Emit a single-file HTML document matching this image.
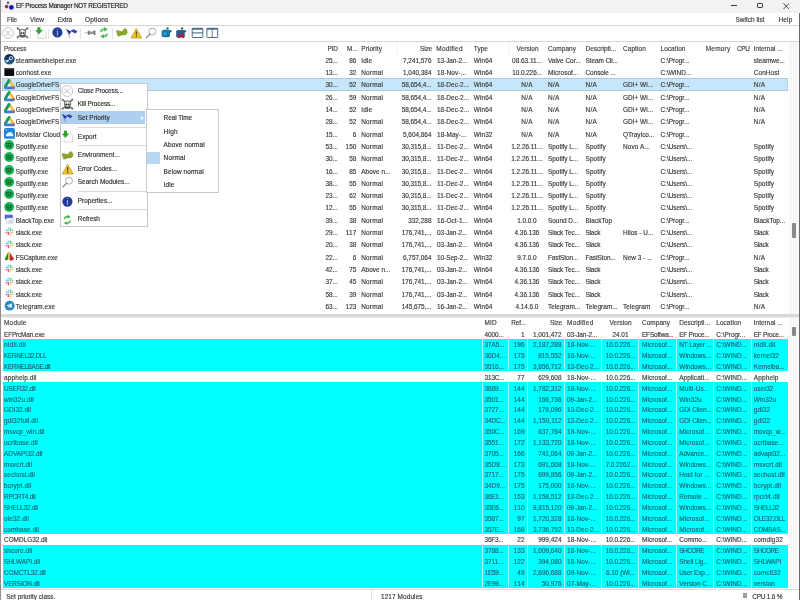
<!DOCTYPE html><html><head><meta charset="utf-8"><style>
*{margin:0;padding:0;box-sizing:border-box}
html,body{width:800px;height:600px;overflow:hidden;background:#fff}
body{position:relative;font-family:"Liberation Sans",sans-serif;font-size:6.45px;color:#383838;line-height:1}
.a{position:absolute;white-space:nowrap}
.t{position:absolute;white-space:nowrap;line-height:10px;height:10px;-webkit-text-stroke:0.15px currentColor}
.r{text-align:right}
.c{text-align:center}
.ic{position:absolute;width:11px;height:11px}
</style></head><body><div style="position:absolute;left:0;top:0;width:800px;height:600px;will-change:transform">
<div class="a" style="left:0;top:0;width:800px;height:13px;background:#f2f2f5"></div>
<div class="a" style="left:0;top:13px;width:800px;height:12px;background:#ffffff"></div>
<div class="a" style="left:0;top:24.5px;width:800px;height:1px;background:#d6d6d6"></div>
<div class="a" style="left:0;top:41.2px;width:800px;height:1px;background:#d6d6d6"></div>
<svg class="a" style="left:4px;top:1px" width="11" height="10" viewBox="0 0 11 10"><circle cx="4" cy="1.8" r="1.3" fill="#6a4a8a"/><circle cx="2.6" cy="5.6" r="1.8" fill="#a82838"/><circle cx="7.4" cy="6.4" r="2.4" fill="#1a1aa0"/></svg>
<div class="t " style="left:16.00px;top:0.57px;letter-spacing:-0.23px;color:#222;">EF Process Manager NOT REGISTERED</div>
<div class="a" style="left:731px;top:5px;width:6px;height:0.7px;background:#3a3a3a"></div>
<div class="a" style="left:757px;top:2.8px;width:5.5px;height:5.4px;border:0.75px solid #333;border-radius:1.2px"></div>
<svg class="a" style="left:783px;top:2.5px" width="6.5" height="6.5" viewBox="0 0 6.5 6.5"><path d="M0.4 0.4L6.1 6.1M6.1 0.4L0.4 6.1" stroke="#2a2a2a" stroke-width="0.8"/></svg>
<div class="t " style="left:7.00px;top:14.77px;letter-spacing:-0.11px;">File</div>
<div class="t " style="left:30.00px;top:14.77px;letter-spacing:0.06px;">View</div>
<div class="t " style="left:57.50px;top:14.77px;letter-spacing:-0.12px;">Extra</div>
<div class="t " style="left:85.00px;top:14.77px;letter-spacing:0.16px;">Options</div>
<div class="t " style="left:735.50px;top:14.77px;letter-spacing:0.04px;">Switch list</div>
<div class="t " style="left:778.50px;top:14.77px;letter-spacing:0.17px;">Help</div>

<svg class="a" style="left:0;top:24px" width="230" height="18" viewBox="0 24 230 18">
<svg x="2" y="27" width="12" height="12" viewBox="0 0 12 12" overflow="visible"><circle cx="6" cy="6" r="5.5" fill="#fcfcfc" stroke="#bdbdbd" stroke-width="0.8"/><path d="M3.3 3.3L8.7 8.7M8.7 3.3L3.3 8.7" stroke="#d4d4d4" stroke-width="1.1"/></svg>
<svg x="16" y="26.8" width="13" height="12" viewBox="0 0 13 12" overflow="visible"><path d="M1.5 1.3L11.5 10.7M11.5 1.3L1.5 10.7" stroke="#6a6a6a" stroke-width="1.4" stroke-linecap="round"/>
<circle cx="1.6" cy="1.6" r="1" fill="#777"/><circle cx="11.4" cy="1.6" r="1" fill="#777"/><circle cx="1.6" cy="10.4" r="1" fill="#777"/><circle cx="11.4" cy="10.4" r="1" fill="#777"/>
<path d="M3.4 5.4Q3.4 2.6 6.5 2.6Q9.6 2.6 9.6 5.4Q9.6 7 8.6 7.8V10.2H4.4V7.8Q3.4 7 3.4 5.4Z" fill="#ececec" stroke="#3a3a3a" stroke-width="0.8"/>
<ellipse cx="5.3" cy="6.3" rx="1" ry="0.9" fill="#222"/><ellipse cx="7.7" cy="6.3" rx="1" ry="0.9" fill="#222"/><path d="M4.6 8.4H8.4V10H4.6Z" fill="#444"/></svg>
<rect x="30.2" y="28.5" width="0.6" height="10.5" fill="#d0d0d0"/>
<svg x="35.5" y="27" width="12" height="12" viewBox="0 0 12 12" overflow="visible"><path d="M2 2.6H8.2L10.6 5V11.6H2Z" fill="#fafaf8" stroke="#c6c6c6" stroke-width="0.6"/><path d="M1.9 0.2H5V3.2H7.2L3.45 7.3L-0.3 3.2H1.9Z" fill="#2ca52c"/></svg>
<rect x="48" y="28.5" width="0.6" height="10.5" fill="#d0d0d0"/>
<svg x="51.6" y="26.6" width="11.6" height="11.6" viewBox="0 0 12 12" overflow="visible"><circle cx="6" cy="6" r="5.3" fill="#2a46a8"/><circle cx="6" cy="6" r="4.3" fill="#1f3c98"/><path d="M6 4.4V9.4" stroke="#dfe8ff" stroke-width="0.75"/><circle cx="6" cy="3" r="0.5" fill="#dfe8ff"/></svg>
<svg x="66" y="28" width="12" height="11" viewBox="0 0 12 11" overflow="visible"><path d="M0.3 0.8L4 9.8" stroke="#444" stroke-width="0.5"/><path d="M0.6 1.2L5.2 3.5L3.8 6.5L1.6 3.8Z" fill="#23309a"/><path d="M4.6 2.6L7.8 1.2L11.6 3.4L9.2 5.6L7 4.2L5.2 3.5Z" fill="#3346b0"/></svg>
<rect x="80.2" y="28.5" width="0.6" height="10.5" fill="#d0d0d0"/>
<svg x="84.2" y="29.6" width="11.5" height="6.7" viewBox="0 0 12 7" overflow="visible"><path d="M0.2 3.3H4" stroke="#b0b0b0" stroke-width="0.9"/><path d="M4 1.6H5.4L6.4 2.4H9.3L10.3 1.2H11.4V5.4H10.3L9.3 4.2H6.4L5.4 5H4Z" fill="#8a8a8a" stroke="#505050" stroke-width="0.5"/><path d="M6.4 2.8H9.2" stroke="#e0e0e0" stroke-width="0.6"/></svg>
<svg x="99.6" y="27" width="8.8" height="11.7" viewBox="0 0 9 12" overflow="visible"><path d="M1.2 5.2Q1.6 2.2 5.4 2.3" stroke="#5cc45c" stroke-width="1.8" fill="none"/><path d="M4.6 0.1L8.4 2.4L4.6 4.6Z" fill="#48b048"/><path d="M7.8 6.8Q7.4 9.8 3.6 9.7" stroke="#5cc45c" stroke-width="1.8" fill="none"/><path d="M4.4 11.9L0.6 9.6L4.4 7.4Z" fill="#48b048"/></svg>
<rect x="112.3" y="28.5" width="0.6" height="10.5" fill="#d0d0d0"/>
<svg x="116" y="28" width="12" height="9" viewBox="0 0 12 9" overflow="visible"><path d="M0.1 2.4Q3 2.2 5.7 3.4Q7.5 1 9.4 0.1Q11.2 1.5 11.8 4.3Q11 6 9.7 7L5.7 7.3Q3.5 8.6 2 8.6Q0.5 6 0.1 2.4Z" fill="#8aa62e"/><path d="M5.7 3.4L5.7 7.3" stroke="#7a9424" stroke-width="0.4"/></svg>
<svg x="130.5" y="28" width="11.6" height="10.6" viewBox="0 0 12 11" overflow="visible"><path d="M6 0.4L11.6 10.5H0.4Z" fill="#f2c624" stroke="#b8902a" stroke-width="0.7" stroke-linejoin="round"/><path d="M5.4 3.6H6.6L6.4 7.6H5.6Z" fill="#3a2a10"/><rect x="5.4" y="8.2" width="1.2" height="1.1" fill="#3a2a10"/></svg>
<svg x="145.5" y="27.4" width="11" height="11" viewBox="0 0 11 11" overflow="visible"><circle cx="6.8" cy="4.2" r="3.5" fill="#fdfdfd" stroke="#8e8e8e" stroke-width="0.7"/><path d="M4.4 6.8L0.8 10.4" stroke="#7a7a7a" stroke-width="1.2" stroke-linecap="round"/></svg>
<!-- puzzle blue -->
<rect x="161.6" y="29.8" width="8.4" height="7.4" rx="2" fill="#1a78a8"/>
<circle cx="167.5" cy="28.4" r="1.2" fill="#206878"/><circle cx="170.4" cy="31.2" r="1.2" fill="#206878"/>
<circle cx="165" cy="33.6" r="1.8" fill="#2a9ccc"/>
<!-- puzzle red/blue -->
<rect x="176.2" y="30" width="8.6" height="7.6" rx="1.6" fill="#2a5a90"/>
<circle cx="182" cy="28.4" r="1.2" fill="#2a6a78"/><circle cx="185" cy="31.2" r="1.2" fill="#2a6a78"/>
<path d="M177.8 38L178.6 33.2L180.8 34.4L183 33.2L184.6 38L182.6 38L181.2 36.2L179.8 38Z" fill="#a8203c"/>
<rect x="188.6" y="28.5" width="0.6" height="10.5" fill="#d0d0d0"/>
<!-- horizontal split -->
<rect x="192.2" y="28.3" width="10.6" height="9.2" rx="0.6" fill="#fff" stroke="#3c5a7a" stroke-width="0.9"/>
<path d="M192.2 29H202.8" stroke="#3c5a7a" stroke-width="1.3"/>
<path d="M192.2 32.9H202.8" stroke="#3c5a7a" stroke-width="1"/>
<!-- vertical split -->
<rect x="206.9" y="28.3" width="10.8" height="9.2" rx="0.6" fill="#fff" stroke="#3c5a7a" stroke-width="0.9"/>
<path d="M206.9 29H217.7" stroke="#3c5a7a" stroke-width="1.3"/>
<path d="M212.2 28.5V37.5" stroke="#3c5a7a" stroke-width="0.8"/>
</svg>
<div class="a" style="left:396.0px;top:42px;width:0.6px;height:12px;background:#f0f0f0"></div>
<div class="a" style="left:509.0px;top:42px;width:0.6px;height:12px;background:#f0f0f0"></div>
<div class="t " style="left:4.00px;top:43.57px;letter-spacing:-0.14px;color:#3d3d3d;">Process</div>
<div class="t " style="left:327.50px;top:43.57px;letter-spacing:-0.16px;color:#3d3d3d;">PID</div>
<div class="t " style="left:347.00px;top:43.57px;letter-spacing:0.02px;color:#3d3d3d;">M...</div>
<div class="t " style="left:361.25px;top:43.57px;letter-spacing:0.10px;color:#3d3d3d;">Priority</div>
<div class="t r" style="left:231.78px;top:43.57px;width:200px;letter-spacing:-0.22px;color:#3d3d3d;">Size</div>
<div class="t " style="left:436.25px;top:43.57px;letter-spacing:0.27px;color:#3d3d3d;">Modified</div>
<div class="t " style="left:473.75px;top:43.57px;letter-spacing:0.05px;color:#3d3d3d;">Type</div>
<div class="t c" style="left:427.54px;top:43.57px;width:200px;letter-spacing:0.08px;color:#3d3d3d;">Version</div>
<div class="t " style="left:548.00px;top:43.57px;letter-spacing:0.07px;color:#3d3d3d;">Company</div>
<div class="t " style="left:585.50px;top:43.57px;letter-spacing:0.03px;color:#3d3d3d;">Descripti...</div>
<div class="t " style="left:623.00px;top:43.57px;letter-spacing:0.10px;color:#3d3d3d;">Caption</div>
<div class="t " style="left:660.50px;top:43.57px;letter-spacing:0.08px;color:#3d3d3d;">Location</div>
<div class="t " style="left:705.75px;top:43.57px;letter-spacing:0.24px;color:#3d3d3d;">Memory</div>
<div class="t " style="left:737.00px;top:43.57px;letter-spacing:-0.34px;color:#3d3d3d;">CPU</div>
<div class="t " style="left:753.75px;top:43.57px;letter-spacing:0.03px;color:#3d3d3d;">Internal ...</div>
<div class="a" style="left:1.5px;top:78.02px;width:786.5px;height:12.71px;background:#c8e6fa;border:1px solid #b3c9d9"></div>
<svg class="ic" style="left:3.5px;top:54.00px" viewBox="0 0 11.5 11.5" width="11.5" height="11.5"><defs><linearGradient id="gst" x1="0" y1="0" x2="0" y2="1"><stop offset="0" stop-color="#1b1f4a"/><stop offset="1" stop-color="#176a8c"/></linearGradient></defs><circle cx="5.6" cy="5.5" r="5.5" fill="url(#gst)"/><circle cx="7.3" cy="4.3" r="1.7" fill="none" stroke="#d8f0f8" stroke-width="0.9"/><circle cx="3.6" cy="7.4" r="1.2" fill="#d8f0f8"/><path d="M3.6 7.4L6.6 5" stroke="#d8f0f8" stroke-width="1"/><path d="M0.4 6.4L3.2 7.6" stroke="#9ad8f0" stroke-width="1.1"/></svg>
<div class="t " style="left:15.80px;top:55.77px;letter-spacing:0.09px;">steamwebhelper.exe</div>
<div class="t " style="left:325.50px;top:55.77px;letter-spacing:-0.09px;">25...</div>
<div class="t r" style="left:156.32px;top:55.77px;width:200px;">86</div>
<div class="t " style="left:361.25px;top:55.77px;letter-spacing:0.12px;">Idle</div>
<div class="t r" style="left:231.48px;top:55.77px;width:200px;letter-spacing:-0.02px;">7,241,576</div>
<div class="t " style="left:437.00px;top:55.77px;letter-spacing:-0.05px;">13-Jan-2...</div>
<div class="t " style="left:473.75px;top:55.77px;letter-spacing:0.10px;">Win64</div>
<div class="t c" style="left:426.99px;top:55.77px;width:200px;letter-spacing:-0.02px;">08.63.11...</div>
<div class="t " style="left:548.00px;top:55.77px;">Valve Cor...</div>
<div class="t " style="left:585.50px;top:55.77px;letter-spacing:-0.08px;">Steam Cli...</div>
<div class="t " style="left:623.00px;top:55.77px;"></div>
<div class="t " style="left:660.50px;top:55.77px;">C:\Progr...</div>
<div class="t " style="left:753.75px;top:55.77px;">steamwe...</div>
<svg class="ic" style="left:3.5px;top:66.31px" viewBox="0 0 11.5 11.5" width="11.5" height="11.5"><rect x="0.4" y="2.3" width="10.2" height="8.1" fill="#0a0a0a"/><rect x="0.4" y="2.3" width="10.2" height="1.3" fill="#4a4a4a"/></svg>
<div class="t " style="left:15.80px;top:68.08px;letter-spacing:0.07px;">conhost.exe</div>
<div class="t " style="left:325.50px;top:68.08px;letter-spacing:-0.09px;">13...</div>
<div class="t r" style="left:156.32px;top:68.08px;width:200px;">32</div>
<div class="t " style="left:361.25px;top:68.08px;letter-spacing:0.19px;">Normal</div>
<div class="t r" style="left:231.48px;top:68.08px;width:200px;letter-spacing:-0.02px;">1,040,384</div>
<div class="t " style="left:437.00px;top:68.08px;letter-spacing:0.10px;">18-Nov-...</div>
<div class="t " style="left:473.75px;top:68.08px;letter-spacing:0.10px;">Win64</div>
<div class="t c" style="left:426.97px;top:68.08px;width:200px;letter-spacing:-0.07px;">10.0.226...</div>
<div class="t " style="left:548.00px;top:68.08px;letter-spacing:0.08px;">Microsof...</div>
<div class="t " style="left:585.50px;top:68.08px;letter-spacing:-0.04px;">Console ...</div>
<div class="t " style="left:623.00px;top:68.08px;"></div>
<div class="t " style="left:660.50px;top:68.08px;">C:\WIND...</div>
<div class="t " style="left:753.75px;top:68.08px;letter-spacing:0.09px;">ConHost</div>
<svg class="ic" style="left:3.5px;top:78.62px" viewBox="0 0 11.5 11.5" width="11.5" height="11.5"><path d="M5.4 1.6L10.6 8.8" stroke="#f2c04a" stroke-width="3" stroke-linecap="round"/><path d="M5.2 1.6L1 8.6" stroke="#1d9a58" stroke-width="3" stroke-linecap="round"/><path d="M1.6 9.2H10" stroke="#3b7bd8" stroke-width="2.8" stroke-linecap="round"/><path d="M9.2 9.4L10.6 8.6" stroke="#d2584a" stroke-width="1.6" stroke-linecap="round" opacity="0.7"/><path d="M5.3 5L7 7.6H3.7Z" fill="#eaf6f2"/></svg>
<div class="t " style="left:15.80px;top:80.39px;letter-spacing:-0.04px;">GoogleDriveFS</div>
<div class="t " style="left:325.50px;top:80.39px;letter-spacing:-0.09px;">30...</div>
<div class="t r" style="left:156.32px;top:80.39px;width:200px;">52</div>
<div class="t " style="left:361.25px;top:80.39px;letter-spacing:0.19px;">Normal</div>
<div class="t r" style="left:231.43px;top:80.39px;width:200px;letter-spacing:-0.07px;">58,654,4...</div>
<div class="t " style="left:437.00px;top:80.39px;letter-spacing:0.02px;">18-Dec-2...</div>
<div class="t " style="left:473.75px;top:80.39px;letter-spacing:0.10px;">Win64</div>
<div class="t c" style="left:427.16px;top:80.39px;width:200px;letter-spacing:0.31px;">N/A</div>
<div class="t " style="left:548.00px;top:80.39px;letter-spacing:0.31px;">N/A</div>
<div class="t " style="left:585.50px;top:80.39px;letter-spacing:0.31px;">N/A</div>
<div class="t " style="left:623.00px;top:80.39px;letter-spacing:0.02px;">GDI+ Wi...</div>
<div class="t " style="left:660.50px;top:80.39px;">C:\Progr...</div>
<div class="t " style="left:753.75px;top:80.39px;letter-spacing:0.31px;">N/A</div>
<svg class="ic" style="left:3.5px;top:90.93px" viewBox="0 0 11.5 11.5" width="11.5" height="11.5"><path d="M5.4 1.6L10.6 8.8" stroke="#f2c04a" stroke-width="3" stroke-linecap="round"/><path d="M5.2 1.6L1 8.6" stroke="#1d9a58" stroke-width="3" stroke-linecap="round"/><path d="M1.6 9.2H10" stroke="#3b7bd8" stroke-width="2.8" stroke-linecap="round"/><path d="M9.2 9.4L10.6 8.6" stroke="#d2584a" stroke-width="1.6" stroke-linecap="round" opacity="0.7"/><path d="M5.3 5L7 7.6H3.7Z" fill="#eaf6f2"/></svg>
<div class="t " style="left:15.80px;top:92.70px;letter-spacing:-0.04px;">GoogleDriveFS</div>
<div class="t " style="left:325.50px;top:92.70px;letter-spacing:-0.09px;">26...</div>
<div class="t r" style="left:156.32px;top:92.70px;width:200px;">59</div>
<div class="t " style="left:361.25px;top:92.70px;letter-spacing:0.19px;">Normal</div>
<div class="t r" style="left:231.43px;top:92.70px;width:200px;letter-spacing:-0.07px;">58,654,4...</div>
<div class="t " style="left:437.00px;top:92.70px;letter-spacing:0.02px;">18-Dec-2...</div>
<div class="t " style="left:473.75px;top:92.70px;letter-spacing:0.10px;">Win64</div>
<div class="t c" style="left:427.16px;top:92.70px;width:200px;letter-spacing:0.31px;">N/A</div>
<div class="t " style="left:548.00px;top:92.70px;letter-spacing:0.31px;">N/A</div>
<div class="t " style="left:585.50px;top:92.70px;letter-spacing:0.31px;">N/A</div>
<div class="t " style="left:623.00px;top:92.70px;letter-spacing:0.02px;">GDI+ Wi...</div>
<div class="t " style="left:660.50px;top:92.70px;">C:\Progr...</div>
<div class="t " style="left:753.75px;top:92.70px;letter-spacing:0.31px;">N/A</div>
<svg class="ic" style="left:3.5px;top:103.24px" viewBox="0 0 11.5 11.5" width="11.5" height="11.5"><path d="M5.4 1.6L10.6 8.8" stroke="#f2c04a" stroke-width="3" stroke-linecap="round"/><path d="M5.2 1.6L1 8.6" stroke="#1d9a58" stroke-width="3" stroke-linecap="round"/><path d="M1.6 9.2H10" stroke="#3b7bd8" stroke-width="2.8" stroke-linecap="round"/><path d="M9.2 9.4L10.6 8.6" stroke="#d2584a" stroke-width="1.6" stroke-linecap="round" opacity="0.7"/><path d="M5.3 5L7 7.6H3.7Z" fill="#eaf6f2"/></svg>
<div class="t " style="left:15.80px;top:105.01px;letter-spacing:-0.04px;">GoogleDriveFS</div>
<div class="t " style="left:325.50px;top:105.01px;letter-spacing:-0.09px;">14...</div>
<div class="t r" style="left:156.32px;top:105.01px;width:200px;">52</div>
<div class="t " style="left:361.25px;top:105.01px;letter-spacing:0.12px;">Idle</div>
<div class="t r" style="left:231.43px;top:105.01px;width:200px;letter-spacing:-0.07px;">58,654,4...</div>
<div class="t " style="left:437.00px;top:105.01px;letter-spacing:0.02px;">18-Dec-2...</div>
<div class="t " style="left:473.75px;top:105.01px;letter-spacing:0.10px;">Win64</div>
<div class="t c" style="left:427.16px;top:105.01px;width:200px;letter-spacing:0.31px;">N/A</div>
<div class="t " style="left:548.00px;top:105.01px;letter-spacing:0.31px;">N/A</div>
<div class="t " style="left:585.50px;top:105.01px;letter-spacing:0.31px;">N/A</div>
<div class="t " style="left:623.00px;top:105.01px;letter-spacing:0.02px;">GDI+ Wi...</div>
<div class="t " style="left:660.50px;top:105.01px;">C:\Progr...</div>
<div class="t " style="left:753.75px;top:105.01px;letter-spacing:0.31px;">N/A</div>
<svg class="ic" style="left:3.5px;top:115.55px" viewBox="0 0 11.5 11.5" width="11.5" height="11.5"><path d="M5.4 1.6L10.6 8.8" stroke="#f2c04a" stroke-width="3" stroke-linecap="round"/><path d="M5.2 1.6L1 8.6" stroke="#1d9a58" stroke-width="3" stroke-linecap="round"/><path d="M1.6 9.2H10" stroke="#3b7bd8" stroke-width="2.8" stroke-linecap="round"/><path d="M9.2 9.4L10.6 8.6" stroke="#d2584a" stroke-width="1.6" stroke-linecap="round" opacity="0.7"/><path d="M5.3 5L7 7.6H3.7Z" fill="#eaf6f2"/></svg>
<div class="t " style="left:15.80px;top:117.32px;letter-spacing:-0.04px;">GoogleDriveFS</div>
<div class="t " style="left:325.50px;top:117.32px;letter-spacing:-0.09px;">28...</div>
<div class="t r" style="left:156.32px;top:117.32px;width:200px;">52</div>
<div class="t " style="left:361.25px;top:117.32px;letter-spacing:0.19px;">Normal</div>
<div class="t r" style="left:231.43px;top:117.32px;width:200px;letter-spacing:-0.07px;">58,654,4...</div>
<div class="t " style="left:437.00px;top:117.32px;letter-spacing:0.02px;">18-Dec-2...</div>
<div class="t " style="left:473.75px;top:117.32px;letter-spacing:0.10px;">Win64</div>
<div class="t c" style="left:427.16px;top:117.32px;width:200px;letter-spacing:0.31px;">N/A</div>
<div class="t " style="left:548.00px;top:117.32px;letter-spacing:0.31px;">N/A</div>
<div class="t " style="left:585.50px;top:117.32px;letter-spacing:0.31px;">N/A</div>
<div class="t " style="left:623.00px;top:117.32px;letter-spacing:0.02px;">GDI+ Wi...</div>
<div class="t " style="left:660.50px;top:117.32px;">C:\Progr...</div>
<div class="t " style="left:753.75px;top:117.32px;letter-spacing:0.31px;">N/A</div>
<svg class="ic" style="left:3.5px;top:127.86px" viewBox="0 0 11.5 11.5" width="11.5" height="11.5"><rect x="0" y="0" width="11.5" height="11.3" rx="2" fill="#1f86d6"/><path d="M2 8.6Q1 6.6 3 6.2Q3.4 4 5.8 4.4Q8.2 3.6 8.8 6Q10.4 6.4 9.6 8.6Z" fill="#e6f4ff"/><circle cx="2.5" cy="2.2" r="0.8" fill="#9fd4ff"/></svg>
<div class="t " style="left:15.80px;top:129.63px;letter-spacing:0.11px;">Movistar Cloud</div>
<div class="t " style="left:325.50px;top:129.63px;letter-spacing:-0.09px;">15...</div>
<div class="t r" style="left:156.32px;top:129.63px;width:200px;">6</div>
<div class="t " style="left:361.25px;top:129.63px;letter-spacing:0.19px;">Normal</div>
<div class="t r" style="left:231.48px;top:129.63px;width:200px;letter-spacing:-0.02px;">5,604,864</div>
<div class="t " style="left:437.00px;top:129.63px;letter-spacing:0.07px;">18-May-...</div>
<div class="t " style="left:473.75px;top:129.63px;letter-spacing:0.10px;">Win32</div>
<div class="t c" style="left:427.16px;top:129.63px;width:200px;letter-spacing:0.31px;">N/A</div>
<div class="t " style="left:548.00px;top:129.63px;letter-spacing:0.31px;">N/A</div>
<div class="t " style="left:585.50px;top:129.63px;letter-spacing:0.31px;">N/A</div>
<div class="t " style="left:623.00px;top:129.63px;letter-spacing:-0.04px;">QTrayIco...</div>
<div class="t " style="left:660.50px;top:129.63px;">C:\Progr...</div>
<div class="t " style="left:753.75px;top:129.63px;"></div>
<svg class="ic" style="left:3.5px;top:140.17px" viewBox="0 0 11.5 11.5" width="11.5" height="11.5"><circle cx="5.4" cy="5.2" r="5.2" fill="#1db954"/><path d="M2.5 3.8Q5.8 2.8 8.5 4.2M2.9 5.6Q5.6 4.9 7.9 6M3.2 7.3Q5.4 6.8 7.3 7.6" stroke="#10401f" stroke-width="0.9" fill="none" stroke-linecap="round"/></svg>
<div class="t " style="left:15.80px;top:141.94px;letter-spacing:0.09px;">Spotify.exe</div>
<div class="t " style="left:325.50px;top:141.94px;letter-spacing:-0.09px;">53...</div>
<div class="t r" style="left:156.32px;top:141.94px;width:200px;">150</div>
<div class="t " style="left:361.25px;top:141.94px;letter-spacing:0.19px;">Normal</div>
<div class="t r" style="left:231.43px;top:141.94px;width:200px;letter-spacing:-0.07px;">30,315,8...</div>
<div class="t " style="left:437.00px;top:141.94px;letter-spacing:0.06px;">11-Dec-2...</div>
<div class="t " style="left:473.75px;top:141.94px;letter-spacing:0.10px;">Win64</div>
<div class="t c" style="left:426.98px;top:141.94px;width:200px;letter-spacing:-0.03px;">1.2.26.11...</div>
<div class="t " style="left:548.00px;top:141.94px;letter-spacing:-0.02px;">Spotify L...</div>
<div class="t " style="left:585.50px;top:141.94px;letter-spacing:0.11px;">Spotify</div>
<div class="t " style="left:623.00px;top:141.94px;letter-spacing:0.09px;">Novo A...</div>
<div class="t " style="left:660.50px;top:141.94px;letter-spacing:-0.03px;">C:\Users\...</div>
<div class="t " style="left:753.75px;top:141.94px;letter-spacing:0.11px;">Spotify</div>
<svg class="ic" style="left:3.5px;top:152.48px" viewBox="0 0 11.5 11.5" width="11.5" height="11.5"><circle cx="5.4" cy="5.2" r="5.2" fill="#1db954"/><path d="M2.5 3.8Q5.8 2.8 8.5 4.2M2.9 5.6Q5.6 4.9 7.9 6M3.2 7.3Q5.4 6.8 7.3 7.6" stroke="#10401f" stroke-width="0.9" fill="none" stroke-linecap="round"/></svg>
<div class="t " style="left:15.80px;top:154.25px;letter-spacing:0.09px;">Spotify.exe</div>
<div class="t " style="left:325.50px;top:154.25px;letter-spacing:-0.09px;">30...</div>
<div class="t r" style="left:156.32px;top:154.25px;width:200px;">58</div>
<div class="t " style="left:361.25px;top:154.25px;letter-spacing:0.19px;">Normal</div>
<div class="t r" style="left:231.43px;top:154.25px;width:200px;letter-spacing:-0.07px;">30,315,8...</div>
<div class="t " style="left:437.00px;top:154.25px;letter-spacing:0.06px;">11-Dec-2...</div>
<div class="t " style="left:473.75px;top:154.25px;letter-spacing:0.10px;">Win64</div>
<div class="t c" style="left:426.98px;top:154.25px;width:200px;letter-spacing:-0.03px;">1.2.26.11...</div>
<div class="t " style="left:548.00px;top:154.25px;letter-spacing:-0.02px;">Spotify L...</div>
<div class="t " style="left:585.50px;top:154.25px;letter-spacing:0.11px;">Spotify</div>
<div class="t " style="left:623.00px;top:154.25px;"></div>
<div class="t " style="left:660.50px;top:154.25px;letter-spacing:-0.03px;">C:\Users\...</div>
<div class="t " style="left:753.75px;top:154.25px;letter-spacing:0.11px;">Spotify</div>
<svg class="ic" style="left:3.5px;top:164.79px" viewBox="0 0 11.5 11.5" width="11.5" height="11.5"><circle cx="5.4" cy="5.2" r="5.2" fill="#1db954"/><path d="M2.5 3.8Q5.8 2.8 8.5 4.2M2.9 5.6Q5.6 4.9 7.9 6M3.2 7.3Q5.4 6.8 7.3 7.6" stroke="#10401f" stroke-width="0.9" fill="none" stroke-linecap="round"/></svg>
<div class="t " style="left:15.80px;top:166.56px;letter-spacing:0.09px;">Spotify.exe</div>
<div class="t " style="left:325.50px;top:166.56px;letter-spacing:-0.09px;">16...</div>
<div class="t r" style="left:156.32px;top:166.56px;width:200px;">85</div>
<div class="t " style="left:361.25px;top:166.56px;letter-spacing:0.02px;">Above n...</div>
<div class="t r" style="left:231.43px;top:166.56px;width:200px;letter-spacing:-0.07px;">30,315,8...</div>
<div class="t " style="left:437.00px;top:166.56px;letter-spacing:0.06px;">11-Dec-2...</div>
<div class="t " style="left:473.75px;top:166.56px;letter-spacing:0.10px;">Win64</div>
<div class="t c" style="left:426.98px;top:166.56px;width:200px;letter-spacing:-0.03px;">1.2.26.11...</div>
<div class="t " style="left:548.00px;top:166.56px;letter-spacing:-0.02px;">Spotify L...</div>
<div class="t " style="left:585.50px;top:166.56px;letter-spacing:0.11px;">Spotify</div>
<div class="t " style="left:623.00px;top:166.56px;"></div>
<div class="t " style="left:660.50px;top:166.56px;letter-spacing:-0.03px;">C:\Users\...</div>
<div class="t " style="left:753.75px;top:166.56px;letter-spacing:0.11px;">Spotify</div>
<svg class="ic" style="left:3.5px;top:177.10px" viewBox="0 0 11.5 11.5" width="11.5" height="11.5"><circle cx="5.4" cy="5.2" r="5.2" fill="#1db954"/><path d="M2.5 3.8Q5.8 2.8 8.5 4.2M2.9 5.6Q5.6 4.9 7.9 6M3.2 7.3Q5.4 6.8 7.3 7.6" stroke="#10401f" stroke-width="0.9" fill="none" stroke-linecap="round"/></svg>
<div class="t " style="left:15.80px;top:178.87px;letter-spacing:0.09px;">Spotify.exe</div>
<div class="t " style="left:325.50px;top:178.87px;letter-spacing:-0.09px;">38...</div>
<div class="t r" style="left:156.32px;top:178.87px;width:200px;">55</div>
<div class="t " style="left:361.25px;top:178.87px;letter-spacing:0.19px;">Normal</div>
<div class="t r" style="left:231.43px;top:178.87px;width:200px;letter-spacing:-0.07px;">30,315,8...</div>
<div class="t " style="left:437.00px;top:178.87px;letter-spacing:0.06px;">11-Dec-2...</div>
<div class="t " style="left:473.75px;top:178.87px;letter-spacing:0.10px;">Win64</div>
<div class="t c" style="left:426.98px;top:178.87px;width:200px;letter-spacing:-0.03px;">1.2.26.11...</div>
<div class="t " style="left:548.00px;top:178.87px;letter-spacing:-0.02px;">Spotify L...</div>
<div class="t " style="left:585.50px;top:178.87px;letter-spacing:0.11px;">Spotify</div>
<div class="t " style="left:623.00px;top:178.87px;"></div>
<div class="t " style="left:660.50px;top:178.87px;letter-spacing:-0.03px;">C:\Users\...</div>
<div class="t " style="left:753.75px;top:178.87px;letter-spacing:0.11px;">Spotify</div>
<svg class="ic" style="left:3.5px;top:189.41px" viewBox="0 0 11.5 11.5" width="11.5" height="11.5"><circle cx="5.4" cy="5.2" r="5.2" fill="#1db954"/><path d="M2.5 3.8Q5.8 2.8 8.5 4.2M2.9 5.6Q5.6 4.9 7.9 6M3.2 7.3Q5.4 6.8 7.3 7.6" stroke="#10401f" stroke-width="0.9" fill="none" stroke-linecap="round"/></svg>
<div class="t " style="left:15.80px;top:191.18px;letter-spacing:0.09px;">Spotify.exe</div>
<div class="t " style="left:325.50px;top:191.18px;letter-spacing:-0.09px;">23...</div>
<div class="t r" style="left:156.32px;top:191.18px;width:200px;">62</div>
<div class="t " style="left:361.25px;top:191.18px;letter-spacing:0.19px;">Normal</div>
<div class="t r" style="left:231.43px;top:191.18px;width:200px;letter-spacing:-0.07px;">30,315,8...</div>
<div class="t " style="left:437.00px;top:191.18px;letter-spacing:0.06px;">11-Dec-2...</div>
<div class="t " style="left:473.75px;top:191.18px;letter-spacing:0.10px;">Win64</div>
<div class="t c" style="left:426.98px;top:191.18px;width:200px;letter-spacing:-0.03px;">1.2.26.11...</div>
<div class="t " style="left:548.00px;top:191.18px;letter-spacing:-0.02px;">Spotify L...</div>
<div class="t " style="left:585.50px;top:191.18px;letter-spacing:0.11px;">Spotify</div>
<div class="t " style="left:623.00px;top:191.18px;"></div>
<div class="t " style="left:660.50px;top:191.18px;letter-spacing:-0.03px;">C:\Users\...</div>
<div class="t " style="left:753.75px;top:191.18px;letter-spacing:0.11px;">Spotify</div>
<svg class="ic" style="left:3.5px;top:201.72px" viewBox="0 0 11.5 11.5" width="11.5" height="11.5"><circle cx="5.4" cy="5.2" r="5.2" fill="#1db954"/><path d="M2.5 3.8Q5.8 2.8 8.5 4.2M2.9 5.6Q5.6 4.9 7.9 6M3.2 7.3Q5.4 6.8 7.3 7.6" stroke="#10401f" stroke-width="0.9" fill="none" stroke-linecap="round"/></svg>
<div class="t " style="left:15.80px;top:203.49px;letter-spacing:0.09px;">Spotify.exe</div>
<div class="t " style="left:325.50px;top:203.49px;letter-spacing:-0.09px;">12...</div>
<div class="t r" style="left:156.32px;top:203.49px;width:200px;">55</div>
<div class="t " style="left:361.25px;top:203.49px;letter-spacing:0.19px;">Normal</div>
<div class="t r" style="left:231.43px;top:203.49px;width:200px;letter-spacing:-0.07px;">30,315,8...</div>
<div class="t " style="left:437.00px;top:203.49px;letter-spacing:0.06px;">11-Dec-2...</div>
<div class="t " style="left:473.75px;top:203.49px;letter-spacing:0.10px;">Win64</div>
<div class="t c" style="left:426.98px;top:203.49px;width:200px;letter-spacing:-0.03px;">1.2.26.11...</div>
<div class="t " style="left:548.00px;top:203.49px;letter-spacing:-0.02px;">Spotify L...</div>
<div class="t " style="left:585.50px;top:203.49px;letter-spacing:0.11px;">Spotify</div>
<div class="t " style="left:623.00px;top:203.49px;"></div>
<div class="t " style="left:660.50px;top:203.49px;letter-spacing:-0.03px;">C:\Users\...</div>
<div class="t " style="left:753.75px;top:203.49px;letter-spacing:0.11px;">Spotify</div>
<svg class="ic" style="left:3.5px;top:214.03px" viewBox="0 0 11.5 11.5" width="11.5" height="11.5"><rect x="0.8" y="0.8" width="8.4" height="4.6" fill="#4a66c4"/><rect x="2.8" y="4.2" width="7.8" height="6" fill="#f2f3f5" stroke="#c4c8d0" stroke-width="0.4"/><path d="M4 9.4L6.4 6.8L7.2 9.4M8.4 5.6V9.4" stroke="#a0a4ac" stroke-width="0.6" fill="none"/></svg>
<div class="t " style="left:15.80px;top:215.80px;">BlackTop.exe</div>
<div class="t " style="left:325.50px;top:215.80px;letter-spacing:-0.09px;">39...</div>
<div class="t r" style="left:156.32px;top:215.80px;width:200px;">38</div>
<div class="t " style="left:361.25px;top:215.80px;letter-spacing:0.19px;">Normal</div>
<div class="t r" style="left:231.49px;top:215.80px;width:200px;">332,288</div>
<div class="t " style="left:437.00px;top:215.80px;letter-spacing:0.06px;">16-Oct-1...</div>
<div class="t " style="left:473.75px;top:215.80px;letter-spacing:0.10px;">Win64</div>
<div class="t c" style="left:426.97px;top:215.80px;width:200px;letter-spacing:-0.06px;">1.0.0.0</div>
<div class="t " style="left:548.00px;top:215.80px;letter-spacing:-0.02px;">Sound D...</div>
<div class="t " style="left:585.50px;top:215.80px;letter-spacing:0.05px;">BlackTop</div>
<div class="t " style="left:623.00px;top:215.80px;"></div>
<div class="t " style="left:660.50px;top:215.80px;">C:\Progr...</div>
<div class="t " style="left:753.75px;top:215.80px;">BlackTop...</div>
<svg class="ic" style="left:3.5px;top:226.34px" viewBox="0 0 11.5 11.5" width="11.5" height="11.5"><g transform="translate(1.6,1.6) scale(0.78)" opacity="0.72"><rect x="2.7" y="0" width="2.2" height="2.2" rx="1" fill="#36c5f0"/><rect x="0" y="2.7" width="4.9" height="2.2" rx="1.1" fill="#36c5f0"/><rect x="8.3" y="2.7" width="2.2" height="2.2" rx="1" fill="#2eb67d"/><rect x="5.5" y="0" width="2.2" height="4.9" rx="1.1" fill="#2eb67d"/><rect x="5.5" y="8.3" width="2.2" height="2.2" rx="1" fill="#ecb22e"/><rect x="5.5" y="5.5" width="5" height="2.2" rx="1.1" fill="#ecb22e"/><rect x="0" y="5.5" width="2.2" height="2.2" rx="1" fill="#e01e5a"/><rect x="2.7" y="5.5" width="2.2" height="5" rx="1.1" fill="#e01e5a"/></g></svg>
<div class="t " style="left:15.80px;top:228.11px;letter-spacing:-0.08px;">slack.exe</div>
<div class="t " style="left:325.50px;top:228.11px;letter-spacing:-0.09px;">29...</div>
<div class="t r" style="left:156.48px;top:228.11px;width:200px;letter-spacing:0.18px;">117</div>
<div class="t " style="left:361.25px;top:228.11px;letter-spacing:0.19px;">Normal</div>
<div class="t r" style="left:231.43px;top:228.11px;width:200px;letter-spacing:-0.07px;">176,741,...</div>
<div class="t " style="left:437.00px;top:228.11px;letter-spacing:-0.05px;">03-Jan-2...</div>
<div class="t " style="left:473.75px;top:228.11px;letter-spacing:0.10px;">Win64</div>
<div class="t c" style="left:426.99px;top:228.11px;width:200px;letter-spacing:-0.03px;">4.36.136</div>
<div class="t " style="left:548.00px;top:228.11px;letter-spacing:-0.10px;">Slack Tec...</div>
<div class="t " style="left:585.50px;top:228.11px;letter-spacing:-0.18px;">Slack</div>
<div class="t " style="left:623.00px;top:228.11px;letter-spacing:0.04px;">Hilos - U...</div>
<div class="t " style="left:660.50px;top:228.11px;letter-spacing:-0.03px;">C:\Users\...</div>
<div class="t " style="left:753.75px;top:228.11px;letter-spacing:-0.18px;">Slack</div>
<svg class="ic" style="left:3.5px;top:238.65px" viewBox="0 0 11.5 11.5" width="11.5" height="11.5"><g transform="translate(1.6,1.6) scale(0.78)" opacity="0.72"><rect x="2.7" y="0" width="2.2" height="2.2" rx="1" fill="#36c5f0"/><rect x="0" y="2.7" width="4.9" height="2.2" rx="1.1" fill="#36c5f0"/><rect x="8.3" y="2.7" width="2.2" height="2.2" rx="1" fill="#2eb67d"/><rect x="5.5" y="0" width="2.2" height="4.9" rx="1.1" fill="#2eb67d"/><rect x="5.5" y="8.3" width="2.2" height="2.2" rx="1" fill="#ecb22e"/><rect x="5.5" y="5.5" width="5" height="2.2" rx="1.1" fill="#ecb22e"/><rect x="0" y="5.5" width="2.2" height="2.2" rx="1" fill="#e01e5a"/><rect x="2.7" y="5.5" width="2.2" height="5" rx="1.1" fill="#e01e5a"/></g></svg>
<div class="t " style="left:15.80px;top:240.42px;letter-spacing:-0.08px;">slack.exe</div>
<div class="t " style="left:325.50px;top:240.42px;letter-spacing:-0.09px;">20...</div>
<div class="t r" style="left:156.32px;top:240.42px;width:200px;">38</div>
<div class="t " style="left:361.25px;top:240.42px;letter-spacing:0.19px;">Normal</div>
<div class="t r" style="left:231.43px;top:240.42px;width:200px;letter-spacing:-0.07px;">176,741,...</div>
<div class="t " style="left:437.00px;top:240.42px;letter-spacing:-0.05px;">03-Jan-2...</div>
<div class="t " style="left:473.75px;top:240.42px;letter-spacing:0.10px;">Win64</div>
<div class="t c" style="left:426.99px;top:240.42px;width:200px;letter-spacing:-0.03px;">4.36.136</div>
<div class="t " style="left:548.00px;top:240.42px;letter-spacing:-0.10px;">Slack Tec...</div>
<div class="t " style="left:585.50px;top:240.42px;letter-spacing:-0.18px;">Slack</div>
<div class="t " style="left:623.00px;top:240.42px;"></div>
<div class="t " style="left:660.50px;top:240.42px;letter-spacing:-0.03px;">C:\Users\...</div>
<div class="t " style="left:753.75px;top:240.42px;letter-spacing:-0.18px;">Slack</div>
<svg class="ic" style="left:3.5px;top:250.96px" viewBox="0 0 11.5 11.5" width="11.5" height="11.5"><path d="M4.6 0.5L0.5 8.8Q2.5 10.5 4.6 8.5Z" fill="#2e8a2a"/><path d="M5.8 1.2L10.6 8.3Q8 10.6 5.8 9.6Z" fill="#c8202a"/><path d="M4.6 0.5L5.8 1.2L5.8 9.6L4.6 8.5Z" fill="#e8c030"/></svg>
<div class="t " style="left:15.80px;top:252.73px;letter-spacing:-0.11px;">FSCapture.exe</div>
<div class="t " style="left:325.50px;top:252.73px;letter-spacing:-0.09px;">22...</div>
<div class="t r" style="left:156.32px;top:252.73px;width:200px;">6</div>
<div class="t " style="left:361.25px;top:252.73px;letter-spacing:0.19px;">Normal</div>
<div class="t r" style="left:231.48px;top:252.73px;width:200px;letter-spacing:-0.02px;">6,757,064</div>
<div class="t " style="left:437.00px;top:252.73px;letter-spacing:-0.02px;">10-Sep-2...</div>
<div class="t " style="left:473.75px;top:252.73px;letter-spacing:0.10px;">Win32</div>
<div class="t c" style="left:426.97px;top:252.73px;width:200px;letter-spacing:-0.06px;">9.7.0.0</div>
<div class="t " style="left:548.00px;top:252.73px;letter-spacing:-0.11px;">FastSton...</div>
<div class="t " style="left:585.50px;top:252.73px;letter-spacing:-0.11px;">FastSton...</div>
<div class="t " style="left:623.00px;top:252.73px;letter-spacing:0.03px;">New 3 - ...</div>
<div class="t " style="left:660.50px;top:252.73px;">C:\Progr...</div>
<div class="t " style="left:753.75px;top:252.73px;letter-spacing:0.31px;">N/A</div>
<svg class="ic" style="left:3.5px;top:263.27px" viewBox="0 0 11.5 11.5" width="11.5" height="11.5"><g transform="translate(1.6,1.6) scale(0.78)" opacity="0.72"><rect x="2.7" y="0" width="2.2" height="2.2" rx="1" fill="#36c5f0"/><rect x="0" y="2.7" width="4.9" height="2.2" rx="1.1" fill="#36c5f0"/><rect x="8.3" y="2.7" width="2.2" height="2.2" rx="1" fill="#2eb67d"/><rect x="5.5" y="0" width="2.2" height="4.9" rx="1.1" fill="#2eb67d"/><rect x="5.5" y="8.3" width="2.2" height="2.2" rx="1" fill="#ecb22e"/><rect x="5.5" y="5.5" width="5" height="2.2" rx="1.1" fill="#ecb22e"/><rect x="0" y="5.5" width="2.2" height="2.2" rx="1" fill="#e01e5a"/><rect x="2.7" y="5.5" width="2.2" height="5" rx="1.1" fill="#e01e5a"/></g></svg>
<div class="t " style="left:15.80px;top:265.04px;letter-spacing:-0.08px;">slack.exe</div>
<div class="t " style="left:325.50px;top:265.04px;letter-spacing:-0.09px;">42...</div>
<div class="t r" style="left:156.32px;top:265.04px;width:200px;">75</div>
<div class="t " style="left:361.25px;top:265.04px;letter-spacing:0.02px;">Above n...</div>
<div class="t r" style="left:231.43px;top:265.04px;width:200px;letter-spacing:-0.07px;">176,741,...</div>
<div class="t " style="left:437.00px;top:265.04px;letter-spacing:-0.05px;">03-Jan-2...</div>
<div class="t " style="left:473.75px;top:265.04px;letter-spacing:0.10px;">Win64</div>
<div class="t c" style="left:426.99px;top:265.04px;width:200px;letter-spacing:-0.03px;">4.36.136</div>
<div class="t " style="left:548.00px;top:265.04px;letter-spacing:-0.10px;">Slack Tec...</div>
<div class="t " style="left:585.50px;top:265.04px;letter-spacing:-0.18px;">Slack</div>
<div class="t " style="left:623.00px;top:265.04px;"></div>
<div class="t " style="left:660.50px;top:265.04px;letter-spacing:-0.03px;">C:\Users\...</div>
<div class="t " style="left:753.75px;top:265.04px;letter-spacing:-0.18px;">Slack</div>
<svg class="ic" style="left:3.5px;top:275.58px" viewBox="0 0 11.5 11.5" width="11.5" height="11.5"><g transform="translate(1.6,1.6) scale(0.78)" opacity="0.72"><rect x="2.7" y="0" width="2.2" height="2.2" rx="1" fill="#36c5f0"/><rect x="0" y="2.7" width="4.9" height="2.2" rx="1.1" fill="#36c5f0"/><rect x="8.3" y="2.7" width="2.2" height="2.2" rx="1" fill="#2eb67d"/><rect x="5.5" y="0" width="2.2" height="4.9" rx="1.1" fill="#2eb67d"/><rect x="5.5" y="8.3" width="2.2" height="2.2" rx="1" fill="#ecb22e"/><rect x="5.5" y="5.5" width="5" height="2.2" rx="1.1" fill="#ecb22e"/><rect x="0" y="5.5" width="2.2" height="2.2" rx="1" fill="#e01e5a"/><rect x="2.7" y="5.5" width="2.2" height="5" rx="1.1" fill="#e01e5a"/></g></svg>
<div class="t " style="left:15.80px;top:277.35px;letter-spacing:-0.08px;">slack.exe</div>
<div class="t " style="left:325.50px;top:277.35px;letter-spacing:-0.09px;">37...</div>
<div class="t r" style="left:156.32px;top:277.35px;width:200px;">45</div>
<div class="t " style="left:361.25px;top:277.35px;letter-spacing:0.19px;">Normal</div>
<div class="t r" style="left:231.43px;top:277.35px;width:200px;letter-spacing:-0.07px;">176,741,...</div>
<div class="t " style="left:437.00px;top:277.35px;letter-spacing:-0.05px;">03-Jan-2...</div>
<div class="t " style="left:473.75px;top:277.35px;letter-spacing:0.10px;">Win64</div>
<div class="t c" style="left:426.99px;top:277.35px;width:200px;letter-spacing:-0.03px;">4.36.136</div>
<div class="t " style="left:548.00px;top:277.35px;letter-spacing:-0.10px;">Slack Tec...</div>
<div class="t " style="left:585.50px;top:277.35px;letter-spacing:-0.18px;">Slack</div>
<div class="t " style="left:623.00px;top:277.35px;"></div>
<div class="t " style="left:660.50px;top:277.35px;letter-spacing:-0.03px;">C:\Users\...</div>
<div class="t " style="left:753.75px;top:277.35px;letter-spacing:-0.18px;">Slack</div>
<svg class="ic" style="left:3.5px;top:287.89px" viewBox="0 0 11.5 11.5" width="11.5" height="11.5"><g transform="translate(1.6,1.6) scale(0.78)" opacity="0.72"><rect x="2.7" y="0" width="2.2" height="2.2" rx="1" fill="#36c5f0"/><rect x="0" y="2.7" width="4.9" height="2.2" rx="1.1" fill="#36c5f0"/><rect x="8.3" y="2.7" width="2.2" height="2.2" rx="1" fill="#2eb67d"/><rect x="5.5" y="0" width="2.2" height="4.9" rx="1.1" fill="#2eb67d"/><rect x="5.5" y="8.3" width="2.2" height="2.2" rx="1" fill="#ecb22e"/><rect x="5.5" y="5.5" width="5" height="2.2" rx="1.1" fill="#ecb22e"/><rect x="0" y="5.5" width="2.2" height="2.2" rx="1" fill="#e01e5a"/><rect x="2.7" y="5.5" width="2.2" height="5" rx="1.1" fill="#e01e5a"/></g></svg>
<div class="t " style="left:15.80px;top:289.66px;letter-spacing:-0.08px;">slack.exe</div>
<div class="t " style="left:325.50px;top:289.66px;letter-spacing:-0.09px;">58...</div>
<div class="t r" style="left:156.32px;top:289.66px;width:200px;">39</div>
<div class="t " style="left:361.25px;top:289.66px;letter-spacing:0.19px;">Normal</div>
<div class="t r" style="left:231.43px;top:289.66px;width:200px;letter-spacing:-0.07px;">176,741,...</div>
<div class="t " style="left:437.00px;top:289.66px;letter-spacing:-0.05px;">03-Jan-2...</div>
<div class="t " style="left:473.75px;top:289.66px;letter-spacing:0.10px;">Win64</div>
<div class="t c" style="left:426.99px;top:289.66px;width:200px;letter-spacing:-0.03px;">4.36.136</div>
<div class="t " style="left:548.00px;top:289.66px;letter-spacing:-0.10px;">Slack Tec...</div>
<div class="t " style="left:585.50px;top:289.66px;letter-spacing:-0.18px;">Slack</div>
<div class="t " style="left:623.00px;top:289.66px;"></div>
<div class="t " style="left:660.50px;top:289.66px;letter-spacing:-0.03px;">C:\Users\...</div>
<div class="t " style="left:753.75px;top:289.66px;letter-spacing:-0.18px;">Slack</div>
<svg class="ic" style="left:3.5px;top:300.20px" viewBox="0 0 11.5 11.5" width="11.5" height="11.5"><circle cx="5.9" cy="5.9" r="5.2" fill="#2a88c4"/><path d="M2.7 5.8L8.7 3.3L7.7 8.5L5.5 7.1L4.5 8.3L4.5 6.7L7.5 4.3L4.3 6.5Z" fill="#e8f4fc"/></svg>
<div class="t " style="left:15.80px;top:301.97px;letter-spacing:0.06px;">Telegram.exe</div>
<div class="t " style="left:325.50px;top:301.97px;letter-spacing:-0.09px;">63...</div>
<div class="t r" style="left:156.32px;top:301.97px;width:200px;">123</div>
<div class="t " style="left:361.25px;top:301.97px;letter-spacing:0.19px;">Normal</div>
<div class="t r" style="left:231.43px;top:301.97px;width:200px;letter-spacing:-0.07px;">145,675,...</div>
<div class="t " style="left:437.00px;top:301.97px;letter-spacing:-0.05px;">16-Jan-2...</div>
<div class="t " style="left:473.75px;top:301.97px;letter-spacing:0.10px;">Win64</div>
<div class="t c" style="left:426.97px;top:301.97px;width:200px;letter-spacing:-0.05px;">4.14.6.0</div>
<div class="t " style="left:548.00px;top:301.97px;letter-spacing:0.04px;">Telegram...</div>
<div class="t " style="left:585.50px;top:301.97px;letter-spacing:0.04px;">Telegram...</div>
<div class="t " style="left:623.00px;top:301.97px;letter-spacing:0.12px;">Telegram</div>
<div class="t " style="left:660.50px;top:301.97px;">C:\Progr...</div>
<div class="t " style="left:753.75px;top:301.97px;letter-spacing:0.31px;">N/A</div>
<div class="a" style="left:789px;top:42px;width:10px;height:272px;background:#f7f7f7"></div>
<div class="a" style="left:792px;top:222.8px;width:3.8px;height:15px;background:#8a8a8a;border-radius:1px"></div>
<div class="a" style="left:0;top:314px;width:800px;height:2.6px;background:#d9d9d9"></div>
<div class="a" style="left:0;top:316.6px;width:800px;height:1px;background:#f0f0f0"></div>
<div class="t " style="left:4.00px;top:317.77px;letter-spacing:0.26px;color:#3d3d3d;">Module</div>
<div class="t " style="left:484.50px;top:317.77px;letter-spacing:0.23px;color:#3d3d3d;">MID</div>
<div class="t " style="left:511.25px;top:317.77px;letter-spacing:-0.16px;color:#3d3d3d;">Ref...</div>
<div class="t r" style="left:361.78px;top:317.77px;width:200px;letter-spacing:-0.22px;color:#3d3d3d;">Size</div>
<div class="t " style="left:567.00px;top:317.77px;letter-spacing:0.27px;color:#3d3d3d;">Modified</div>
<div class="t c" style="left:520.54px;top:317.77px;width:200px;letter-spacing:0.08px;color:#3d3d3d;">Version</div>
<div class="t " style="left:642.00px;top:317.77px;letter-spacing:0.07px;color:#3d3d3d;">Company</div>
<div class="t " style="left:679.25px;top:317.77px;letter-spacing:0.03px;color:#3d3d3d;">Descripti...</div>
<div class="t " style="left:716.25px;top:317.77px;letter-spacing:0.08px;color:#3d3d3d;">Location</div>
<div class="t " style="left:753.75px;top:317.77px;letter-spacing:0.03px;color:#3d3d3d;">Internal ...</div>
<div class="a" style="left:3px;top:338.83px;width:785px;height:32.51px;background:#00ffff"></div>
<div class="a" style="left:481.90px;top:338.83px;width:1.2px;height:32.51px;background:#a0ffff"></div>
<div class="a" style="left:507.60px;top:338.83px;width:1.2px;height:32.51px;background:#a0ffff"></div>
<div class="a" style="left:527.00px;top:338.83px;width:1.2px;height:32.51px;background:#a0ffff"></div>
<div class="a" style="left:563.90px;top:338.83px;width:1.2px;height:32.51px;background:#a0ffff"></div>
<div class="a" style="left:600.60px;top:338.83px;width:1.2px;height:32.51px;background:#a0ffff"></div>
<div class="a" style="left:638.20px;top:338.83px;width:1.2px;height:32.51px;background:#a0ffff"></div>
<div class="a" style="left:675.60px;top:338.83px;width:1.2px;height:32.51px;background:#a0ffff"></div>
<div class="a" style="left:713.20px;top:338.83px;width:1.2px;height:32.51px;background:#a0ffff"></div>
<div class="a" style="left:750.60px;top:338.83px;width:1.2px;height:32.51px;background:#a0ffff"></div>
<div class="a" style="left:3px;top:382.18px;width:785px;height:151.69px;background:#00ffff"></div>
<div class="a" style="left:481.90px;top:382.18px;width:1.2px;height:151.69px;background:#a0ffff"></div>
<div class="a" style="left:507.60px;top:382.18px;width:1.2px;height:151.69px;background:#a0ffff"></div>
<div class="a" style="left:527.00px;top:382.18px;width:1.2px;height:151.69px;background:#a0ffff"></div>
<div class="a" style="left:563.90px;top:382.18px;width:1.2px;height:151.69px;background:#a0ffff"></div>
<div class="a" style="left:600.60px;top:382.18px;width:1.2px;height:151.69px;background:#a0ffff"></div>
<div class="a" style="left:638.20px;top:382.18px;width:1.2px;height:151.69px;background:#a0ffff"></div>
<div class="a" style="left:675.60px;top:382.18px;width:1.2px;height:151.69px;background:#a0ffff"></div>
<div class="a" style="left:713.20px;top:382.18px;width:1.2px;height:151.69px;background:#a0ffff"></div>
<div class="a" style="left:750.60px;top:382.18px;width:1.2px;height:151.69px;background:#a0ffff"></div>
<div class="a" style="left:3px;top:544.70px;width:785px;height:43.34px;background:#00ffff"></div>
<div class="a" style="left:481.90px;top:544.70px;width:1.2px;height:43.34px;background:#a0ffff"></div>
<div class="a" style="left:507.60px;top:544.70px;width:1.2px;height:43.34px;background:#a0ffff"></div>
<div class="a" style="left:527.00px;top:544.70px;width:1.2px;height:43.34px;background:#a0ffff"></div>
<div class="a" style="left:563.90px;top:544.70px;width:1.2px;height:43.34px;background:#a0ffff"></div>
<div class="a" style="left:600.60px;top:544.70px;width:1.2px;height:43.34px;background:#a0ffff"></div>
<div class="a" style="left:638.20px;top:544.70px;width:1.2px;height:43.34px;background:#a0ffff"></div>
<div class="a" style="left:675.60px;top:544.70px;width:1.2px;height:43.34px;background:#a0ffff"></div>
<div class="a" style="left:713.20px;top:544.70px;width:1.2px;height:43.34px;background:#a0ffff"></div>
<div class="a" style="left:750.60px;top:544.70px;width:1.2px;height:43.34px;background:#a0ffff"></div>
<div class="t " style="left:4.00px;top:329.57px;letter-spacing:-0.16px;">EFPrcMan.exe</div>
<div class="t " style="left:484.50px;top:329.57px;letter-spacing:-0.06px;">4000...</div>
<div class="t r" style="left:324.52px;top:329.57px;width:200px;">1</div>
<div class="t r" style="left:361.48px;top:329.57px;width:200px;letter-spacing:-0.02px;">1,001,472</div>
<div class="t " style="left:567.00px;top:329.57px;letter-spacing:-0.05px;">03-Jan-2...</div>
<div class="t c" style="left:520.49px;top:329.57px;width:200px;">24.01</div>
<div class="t " style="left:642.00px;top:329.57px;letter-spacing:-0.17px;">EFSoftwa...</div>
<div class="t " style="left:679.25px;top:329.57px;letter-spacing:-0.22px;">EF Proce...</div>
<div class="t " style="left:716.25px;top:329.57px;">C:\Progr...</div>
<div class="t " style="left:753.75px;top:329.57px;letter-spacing:-0.22px;">EF Proce...</div>
<div class="t " style="left:4.00px;top:340.40px;letter-spacing:0.20px;color:#136676;">ntdll.dll</div>
<div class="t " style="left:484.50px;top:340.40px;letter-spacing:-0.08px;color:#136676;">37A5...</div>
<div class="t r" style="left:324.52px;top:340.40px;width:200px;color:#136676;">196</div>
<div class="t r" style="left:361.48px;top:340.40px;width:200px;letter-spacing:-0.02px;color:#136676;">2,187,288</div>
<div class="t " style="left:567.00px;top:340.40px;letter-spacing:0.10px;color:#136676;">18-Nov-...</div>
<div class="t c" style="left:520.47px;top:340.40px;width:200px;letter-spacing:-0.07px;color:#136676;">10.0.226...</div>
<div class="t " style="left:642.00px;top:340.40px;letter-spacing:0.08px;color:#136676;">Microsof...</div>
<div class="t " style="left:679.25px;top:340.40px;letter-spacing:-0.09px;color:#136676;">NT Layer ...</div>
<div class="t " style="left:716.25px;top:340.40px;color:#136676;">C:\WIND...</div>
<div class="t " style="left:753.75px;top:340.40px;letter-spacing:0.20px;color:#136676;">ntdll.dll</div>
<div class="t " style="left:4.00px;top:351.24px;letter-spacing:-0.36px;color:#136676;">KERNEL32.DLL</div>
<div class="t " style="left:484.50px;top:351.24px;letter-spacing:-0.05px;color:#136676;">36D4...</div>
<div class="t r" style="left:324.52px;top:351.24px;width:200px;color:#136676;">175</div>
<div class="t r" style="left:361.49px;top:351.24px;width:200px;color:#136676;">815,552</div>
<div class="t " style="left:567.00px;top:351.24px;letter-spacing:0.10px;color:#136676;">18-Nov-...</div>
<div class="t c" style="left:520.47px;top:351.24px;width:200px;letter-spacing:-0.07px;color:#136676;">10.0.226...</div>
<div class="t " style="left:642.00px;top:351.24px;letter-spacing:0.08px;color:#136676;">Microsof...</div>
<div class="t " style="left:679.25px;top:351.24px;letter-spacing:0.05px;color:#136676;">Windows...</div>
<div class="t " style="left:716.25px;top:351.24px;color:#136676;">C:\WIND...</div>
<div class="t " style="left:753.75px;top:351.24px;letter-spacing:0.07px;color:#136676;">kernel32</div>
<div class="t " style="left:4.00px;top:362.07px;letter-spacing:-0.36px;color:#136676;">KERNELBASE.dll</div>
<div class="t " style="left:484.50px;top:362.07px;letter-spacing:-0.06px;color:#136676;">3516...</div>
<div class="t r" style="left:324.52px;top:362.07px;width:200px;color:#136676;">175</div>
<div class="t r" style="left:361.48px;top:362.07px;width:200px;letter-spacing:-0.02px;color:#136676;">3,856,712</div>
<div class="t " style="left:567.00px;top:362.07px;letter-spacing:0.02px;color:#136676;">13-Dec-2...</div>
<div class="t c" style="left:520.47px;top:362.07px;width:200px;letter-spacing:-0.07px;color:#136676;">10.0.226...</div>
<div class="t " style="left:642.00px;top:362.07px;letter-spacing:0.08px;color:#136676;">Microsof...</div>
<div class="t " style="left:679.25px;top:362.07px;letter-spacing:0.05px;color:#136676;">Windows...</div>
<div class="t " style="left:716.25px;top:362.07px;color:#136676;">C:\WIND...</div>
<div class="t " style="left:753.75px;top:362.07px;letter-spacing:-0.04px;color:#136676;">Kernelba...</div>
<div class="t " style="left:4.00px;top:372.91px;letter-spacing:0.14px;">apphelp.dll</div>
<div class="t " style="left:484.50px;top:372.91px;letter-spacing:-0.14px;">313C...</div>
<div class="t r" style="left:324.52px;top:372.91px;width:200px;">77</div>
<div class="t r" style="left:361.49px;top:372.91px;width:200px;">629,608</div>
<div class="t " style="left:567.00px;top:372.91px;letter-spacing:0.10px;">18-Nov-...</div>
<div class="t c" style="left:520.47px;top:372.91px;width:200px;letter-spacing:-0.07px;">10.0.226...</div>
<div class="t " style="left:642.00px;top:372.91px;letter-spacing:0.08px;">Microsof...</div>
<div class="t " style="left:679.25px;top:372.91px;letter-spacing:0.06px;">Applicati...</div>
<div class="t " style="left:716.25px;top:372.91px;">C:\WIND...</div>
<div class="t " style="left:753.75px;top:372.91px;letter-spacing:0.18px;">Apphelp</div>
<div class="t " style="left:4.00px;top:383.74px;letter-spacing:-0.18px;color:#136676;">USER32.dll</div>
<div class="t " style="left:484.50px;top:383.74px;letter-spacing:-0.06px;color:#136676;">3689...</div>
<div class="t r" style="left:324.52px;top:383.74px;width:200px;color:#136676;">144</div>
<div class="t r" style="left:361.48px;top:383.74px;width:200px;letter-spacing:-0.02px;color:#136676;">1,782,312</div>
<div class="t " style="left:567.00px;top:383.74px;letter-spacing:0.10px;color:#136676;">18-Nov-...</div>
<div class="t c" style="left:520.47px;top:383.74px;width:200px;letter-spacing:-0.07px;color:#136676;">10.0.226...</div>
<div class="t " style="left:642.00px;top:383.74px;letter-spacing:0.08px;color:#136676;">Microsof...</div>
<div class="t " style="left:679.25px;top:383.74px;letter-spacing:0.11px;color:#136676;">Multi-Us...</div>
<div class="t " style="left:716.25px;top:383.74px;color:#136676;">C:\WIND...</div>
<div class="t " style="left:753.75px;top:383.74px;color:#136676;">user32</div>
<div class="t " style="left:4.00px;top:394.58px;letter-spacing:0.13px;color:#136676;">win32u.dll</div>
<div class="t " style="left:484.50px;top:394.58px;letter-spacing:-0.06px;color:#136676;">3501...</div>
<div class="t r" style="left:324.52px;top:394.58px;width:200px;color:#136676;">144</div>
<div class="t r" style="left:361.49px;top:394.58px;width:200px;color:#136676;">166,736</div>
<div class="t " style="left:567.00px;top:394.58px;letter-spacing:-0.05px;color:#136676;">09-Jan-2...</div>
<div class="t c" style="left:520.47px;top:394.58px;width:200px;letter-spacing:-0.07px;color:#136676;">10.0.226...</div>
<div class="t " style="left:642.00px;top:394.58px;letter-spacing:0.08px;color:#136676;">Microsof...</div>
<div class="t " style="left:679.25px;top:394.58px;letter-spacing:0.12px;color:#136676;">Win32u</div>
<div class="t " style="left:716.25px;top:394.58px;color:#136676;">C:\WIND...</div>
<div class="t " style="left:753.75px;top:394.58px;letter-spacing:0.12px;color:#136676;">Win32u</div>
<div class="t " style="left:4.00px;top:405.41px;color:#136676;">GDI32.dll</div>
<div class="t " style="left:484.50px;top:405.41px;letter-spacing:-0.06px;color:#136676;">3727...</div>
<div class="t r" style="left:324.52px;top:405.41px;width:200px;color:#136676;">144</div>
<div class="t r" style="left:361.49px;top:405.41px;width:200px;color:#136676;">179,096</div>
<div class="t " style="left:567.00px;top:405.41px;letter-spacing:0.02px;color:#136676;">13-Dec-2...</div>
<div class="t c" style="left:520.47px;top:405.41px;width:200px;letter-spacing:-0.07px;color:#136676;">10.0.226...</div>
<div class="t " style="left:642.00px;top:405.41px;letter-spacing:0.08px;color:#136676;">Microsof...</div>
<div class="t " style="left:679.25px;top:405.41px;letter-spacing:-0.08px;color:#136676;">GDI Clien...</div>
<div class="t " style="left:716.25px;top:405.41px;color:#136676;">C:\WIND...</div>
<div class="t " style="left:753.75px;top:405.41px;letter-spacing:0.17px;color:#136676;">gdi32</div>
<div class="t " style="left:4.00px;top:416.25px;letter-spacing:0.16px;color:#136676;">gdi32full.dll</div>
<div class="t " style="left:484.50px;top:416.25px;letter-spacing:-0.14px;color:#136676;">34DC...</div>
<div class="t r" style="left:324.52px;top:416.25px;width:200px;color:#136676;">144</div>
<div class="t r" style="left:361.53px;top:416.25px;width:200px;letter-spacing:0.03px;color:#136676;">1,150,112</div>
<div class="t " style="left:567.00px;top:416.25px;letter-spacing:0.02px;color:#136676;">13-Dec-2...</div>
<div class="t c" style="left:520.47px;top:416.25px;width:200px;letter-spacing:-0.07px;color:#136676;">10.0.226...</div>
<div class="t " style="left:642.00px;top:416.25px;letter-spacing:0.08px;color:#136676;">Microsof...</div>
<div class="t " style="left:679.25px;top:416.25px;letter-spacing:-0.08px;color:#136676;">GDI Clien...</div>
<div class="t " style="left:716.25px;top:416.25px;color:#136676;">C:\WIND...</div>
<div class="t " style="left:753.75px;top:416.25px;letter-spacing:0.17px;color:#136676;">gdi32</div>
<div class="t " style="left:4.00px;top:427.08px;letter-spacing:0.03px;color:#136676;">msvcp_win.dll</div>
<div class="t " style="left:484.50px;top:427.08px;letter-spacing:-0.14px;color:#136676;">350C...</div>
<div class="t r" style="left:324.52px;top:427.08px;width:200px;color:#136676;">169</div>
<div class="t r" style="left:361.49px;top:427.08px;width:200px;color:#136676;">637,784</div>
<div class="t " style="left:567.00px;top:427.08px;letter-spacing:0.10px;color:#136676;">18-Nov-...</div>
<div class="t c" style="left:520.47px;top:427.08px;width:200px;letter-spacing:-0.07px;color:#136676;">10.0.226...</div>
<div class="t " style="left:642.00px;top:427.08px;letter-spacing:0.08px;color:#136676;">Microsof...</div>
<div class="t " style="left:679.25px;top:427.08px;letter-spacing:0.08px;color:#136676;">Microsof...</div>
<div class="t " style="left:716.25px;top:427.08px;color:#136676;">C:\WIND...</div>
<div class="t " style="left:753.75px;top:427.08px;letter-spacing:-0.05px;color:#136676;">msvcp_w...</div>
<div class="t " style="left:4.00px;top:437.92px;letter-spacing:0.07px;color:#136676;">ucrtbase.dll</div>
<div class="t " style="left:484.50px;top:437.92px;letter-spacing:-0.06px;color:#136676;">3551...</div>
<div class="t r" style="left:324.52px;top:437.92px;width:200px;color:#136676;">172</div>
<div class="t r" style="left:361.48px;top:437.92px;width:200px;letter-spacing:-0.02px;color:#136676;">1,133,720</div>
<div class="t " style="left:567.00px;top:437.92px;letter-spacing:0.10px;color:#136676;">18-Nov-...</div>
<div class="t c" style="left:520.47px;top:437.92px;width:200px;letter-spacing:-0.07px;color:#136676;">10.0.226...</div>
<div class="t " style="left:642.00px;top:437.92px;letter-spacing:0.08px;color:#136676;">Microsof...</div>
<div class="t " style="left:679.25px;top:437.92px;letter-spacing:0.08px;color:#136676;">Microsof...</div>
<div class="t " style="left:716.25px;top:437.92px;color:#136676;">C:\WIND...</div>
<div class="t " style="left:753.75px;top:437.92px;color:#136676;">ucrtbase...</div>
<div class="t " style="left:4.00px;top:448.75px;color:#136676;">ADVAPI32.dll</div>
<div class="t " style="left:484.50px;top:448.75px;letter-spacing:-0.06px;color:#136676;">3705...</div>
<div class="t r" style="left:324.52px;top:448.75px;width:200px;color:#136676;">166</div>
<div class="t r" style="left:361.49px;top:448.75px;width:200px;color:#136676;">741,064</div>
<div class="t " style="left:567.00px;top:448.75px;letter-spacing:-0.05px;color:#136676;">09-Jan-2...</div>
<div class="t c" style="left:520.47px;top:448.75px;width:200px;letter-spacing:-0.07px;color:#136676;">10.0.226...</div>
<div class="t " style="left:642.00px;top:448.75px;letter-spacing:0.08px;color:#136676;">Microsof...</div>
<div class="t " style="left:679.25px;top:448.75px;letter-spacing:-0.04px;color:#136676;">Advance...</div>
<div class="t " style="left:716.25px;top:448.75px;color:#136676;">C:\WIND...</div>
<div class="t " style="left:753.75px;top:448.75px;color:#136676;">advapi32...</div>
<div class="t " style="left:4.00px;top:459.59px;letter-spacing:0.10px;color:#136676;">msvcrt.dll</div>
<div class="t " style="left:484.50px;top:459.59px;letter-spacing:-0.05px;color:#136676;">35D8...</div>
<div class="t r" style="left:324.52px;top:459.59px;width:200px;color:#136676;">173</div>
<div class="t r" style="left:361.49px;top:459.59px;width:200px;color:#136676;">691,608</div>
<div class="t " style="left:567.00px;top:459.59px;letter-spacing:0.10px;color:#136676;">18-Nov-...</div>
<div class="t c" style="left:520.47px;top:459.59px;width:200px;letter-spacing:-0.07px;color:#136676;">7.0.2262...</div>
<div class="t " style="left:642.00px;top:459.59px;letter-spacing:0.08px;color:#136676;">Microsof...</div>
<div class="t " style="left:679.25px;top:459.59px;letter-spacing:0.05px;color:#136676;">Windows...</div>
<div class="t " style="left:716.25px;top:459.59px;color:#136676;">C:\WIND...</div>
<div class="t " style="left:753.75px;top:459.59px;letter-spacing:0.10px;color:#136676;">msvcrt.dll</div>
<div class="t " style="left:4.00px;top:470.42px;letter-spacing:0.05px;color:#136676;">sechost.dll</div>
<div class="t " style="left:484.50px;top:470.42px;letter-spacing:-0.06px;color:#136676;">3717...</div>
<div class="t r" style="left:324.52px;top:470.42px;width:200px;color:#136676;">175</div>
<div class="t r" style="left:361.49px;top:470.42px;width:200px;color:#136676;">699,856</div>
<div class="t " style="left:567.00px;top:470.42px;letter-spacing:-0.05px;color:#136676;">09-Jan-2...</div>
<div class="t c" style="left:520.47px;top:470.42px;width:200px;letter-spacing:-0.07px;color:#136676;">10.0.226...</div>
<div class="t " style="left:642.00px;top:470.42px;letter-spacing:0.08px;color:#136676;">Microsof...</div>
<div class="t " style="left:679.25px;top:470.42px;letter-spacing:0.07px;color:#136676;">Host for ...</div>
<div class="t " style="left:716.25px;top:470.42px;color:#136676;">C:\WIND...</div>
<div class="t " style="left:753.75px;top:470.42px;letter-spacing:0.05px;color:#136676;">sechost.dll</div>
<div class="t " style="left:4.00px;top:481.26px;letter-spacing:0.17px;color:#136676;">bcrypt.dll</div>
<div class="t " style="left:484.50px;top:481.26px;letter-spacing:-0.05px;color:#136676;">34D9...</div>
<div class="t r" style="left:324.52px;top:481.26px;width:200px;color:#136676;">175</div>
<div class="t r" style="left:361.49px;top:481.26px;width:200px;color:#136676;">175,000</div>
<div class="t " style="left:567.00px;top:481.26px;letter-spacing:0.10px;color:#136676;">18-Nov-...</div>
<div class="t c" style="left:520.47px;top:481.26px;width:200px;letter-spacing:-0.07px;color:#136676;">10.0.226...</div>
<div class="t " style="left:642.00px;top:481.26px;letter-spacing:0.08px;color:#136676;">Microsof...</div>
<div class="t " style="left:679.25px;top:481.26px;letter-spacing:0.05px;color:#136676;">Windows...</div>
<div class="t " style="left:716.25px;top:481.26px;color:#136676;">C:\WIND...</div>
<div class="t " style="left:753.75px;top:481.26px;letter-spacing:0.17px;color:#136676;">bcrypt.dll</div>
<div class="t " style="left:4.00px;top:492.09px;letter-spacing:-0.24px;color:#136676;">RPCRT4.dll</div>
<div class="t " style="left:484.50px;top:492.09px;letter-spacing:-0.20px;color:#136676;">36E1...</div>
<div class="t r" style="left:324.52px;top:492.09px;width:200px;color:#136676;">153</div>
<div class="t r" style="left:361.48px;top:492.09px;width:200px;letter-spacing:-0.02px;color:#136676;">1,158,512</div>
<div class="t " style="left:567.00px;top:492.09px;letter-spacing:0.02px;color:#136676;">13-Dec-2...</div>
<div class="t c" style="left:520.47px;top:492.09px;width:200px;letter-spacing:-0.07px;color:#136676;">10.0.226...</div>
<div class="t " style="left:642.00px;top:492.09px;letter-spacing:0.08px;color:#136676;">Microsof...</div>
<div class="t " style="left:679.25px;top:492.09px;color:#136676;">Remote ...</div>
<div class="t " style="left:716.25px;top:492.09px;color:#136676;">C:\WIND...</div>
<div class="t " style="left:753.75px;top:492.09px;letter-spacing:0.15px;color:#136676;">rpcrt4.dll</div>
<div class="t " style="left:4.00px;top:502.93px;letter-spacing:-0.18px;color:#136676;">SHELL32.dll</div>
<div class="t " style="left:484.50px;top:502.93px;letter-spacing:-0.20px;color:#136676;">35E6...</div>
<div class="t r" style="left:324.68px;top:502.93px;width:200px;letter-spacing:0.18px;color:#136676;">110</div>
<div class="t r" style="left:361.48px;top:502.93px;width:200px;letter-spacing:-0.02px;color:#136676;">8,815,120</div>
<div class="t " style="left:567.00px;top:502.93px;letter-spacing:-0.05px;color:#136676;">09-Jan-2...</div>
<div class="t c" style="left:520.47px;top:502.93px;width:200px;letter-spacing:-0.07px;color:#136676;">10.0.226...</div>
<div class="t " style="left:642.00px;top:502.93px;letter-spacing:0.08px;color:#136676;">Microsof...</div>
<div class="t " style="left:679.25px;top:502.93px;letter-spacing:0.05px;color:#136676;">Windows...</div>
<div class="t " style="left:716.25px;top:502.93px;color:#136676;">C:\WIND...</div>
<div class="t " style="left:753.75px;top:502.93px;letter-spacing:-0.35px;color:#136676;">SHELL32</div>
<div class="t " style="left:4.00px;top:513.76px;letter-spacing:0.11px;color:#136676;">ole32.dll</div>
<div class="t " style="left:484.50px;top:513.76px;letter-spacing:-0.06px;color:#136676;">3587...</div>
<div class="t r" style="left:324.52px;top:513.76px;width:200px;color:#136676;">97</div>
<div class="t r" style="left:361.48px;top:513.76px;width:200px;letter-spacing:-0.02px;color:#136676;">1,720,328</div>
<div class="t " style="left:567.00px;top:513.76px;letter-spacing:0.10px;color:#136676;">18-Nov-...</div>
<div class="t c" style="left:520.47px;top:513.76px;width:200px;letter-spacing:-0.07px;color:#136676;">10.0.226...</div>
<div class="t " style="left:642.00px;top:513.76px;letter-spacing:0.08px;color:#136676;">Microsof...</div>
<div class="t " style="left:679.25px;top:513.76px;letter-spacing:0.08px;color:#136676;">Microsof...</div>
<div class="t " style="left:716.25px;top:513.76px;color:#136676;">C:\WIND...</div>
<div class="t " style="left:753.75px;top:513.76px;letter-spacing:-0.27px;color:#136676;">OLE32.DLL</div>
<div class="t " style="left:4.00px;top:524.60px;letter-spacing:0.07px;color:#136676;">combase.dll</div>
<div class="t " style="left:484.50px;top:524.60px;letter-spacing:-0.20px;color:#136676;">357E...</div>
<div class="t r" style="left:324.52px;top:524.60px;width:200px;color:#136676;">168</div>
<div class="t r" style="left:361.48px;top:524.60px;width:200px;letter-spacing:-0.02px;color:#136676;">3,736,752</div>
<div class="t " style="left:567.00px;top:524.60px;letter-spacing:0.02px;color:#136676;">13-Dec-2...</div>
<div class="t c" style="left:520.47px;top:524.60px;width:200px;letter-spacing:-0.07px;color:#136676;">10.0.226...</div>
<div class="t " style="left:642.00px;top:524.60px;letter-spacing:0.08px;color:#136676;">Microsof...</div>
<div class="t " style="left:679.25px;top:524.60px;letter-spacing:0.08px;color:#136676;">Microsof...</div>
<div class="t " style="left:716.25px;top:524.60px;color:#136676;">C:\WIND...</div>
<div class="t " style="left:753.75px;top:524.60px;letter-spacing:-0.19px;color:#136676;">COMBAS...</div>
<div class="t " style="left:4.00px;top:535.43px;letter-spacing:-0.02px;">COMDLG32.dll</div>
<div class="t " style="left:484.50px;top:535.43px;letter-spacing:-0.17px;">36F3...</div>
<div class="t r" style="left:324.52px;top:535.43px;width:200px;">22</div>
<div class="t r" style="left:361.49px;top:535.43px;width:200px;">999,424</div>
<div class="t " style="left:567.00px;top:535.43px;letter-spacing:0.10px;">18-Nov-...</div>
<div class="t c" style="left:520.47px;top:535.43px;width:200px;letter-spacing:-0.07px;">10.0.226...</div>
<div class="t " style="left:642.00px;top:535.43px;letter-spacing:0.08px;">Microsof...</div>
<div class="t " style="left:679.25px;top:535.43px;letter-spacing:0.04px;">Commo...</div>
<div class="t " style="left:716.25px;top:535.43px;">C:\WIND...</div>
<div class="t " style="left:753.75px;top:535.43px;letter-spacing:0.18px;">comdlg32</div>
<div class="t " style="left:4.00px;top:546.27px;letter-spacing:0.06px;color:#136676;">shcore.dll</div>
<div class="t " style="left:484.50px;top:546.27px;letter-spacing:-0.06px;color:#136676;">3788...</div>
<div class="t r" style="left:324.52px;top:546.27px;width:200px;color:#136676;">133</div>
<div class="t r" style="left:361.48px;top:546.27px;width:200px;letter-spacing:-0.02px;color:#136676;">1,009,640</div>
<div class="t " style="left:567.00px;top:546.27px;letter-spacing:0.10px;color:#136676;">18-Nov-...</div>
<div class="t c" style="left:520.47px;top:546.27px;width:200px;letter-spacing:-0.07px;color:#136676;">10.0.226...</div>
<div class="t " style="left:642.00px;top:546.27px;letter-spacing:0.08px;color:#136676;">Microsof...</div>
<div class="t " style="left:679.25px;top:546.27px;letter-spacing:-0.45px;color:#136676;">SHCORE</div>
<div class="t " style="left:716.25px;top:546.27px;color:#136676;">C:\WIND...</div>
<div class="t " style="left:753.75px;top:546.27px;letter-spacing:-0.45px;color:#136676;">SHCORE</div>
<div class="t " style="left:4.00px;top:557.10px;letter-spacing:-0.04px;color:#136676;">SHLWAPI.dll</div>
<div class="t " style="left:484.50px;top:557.10px;color:#136676;">3711...</div>
<div class="t r" style="left:324.52px;top:557.10px;width:200px;color:#136676;">122</div>
<div class="t r" style="left:361.49px;top:557.10px;width:200px;color:#136676;">394,080</div>
<div class="t " style="left:567.00px;top:557.10px;letter-spacing:0.10px;color:#136676;">18-Nov-...</div>
<div class="t c" style="left:520.47px;top:557.10px;width:200px;letter-spacing:-0.07px;color:#136676;">10.0.226...</div>
<div class="t " style="left:642.00px;top:557.10px;letter-spacing:0.08px;color:#136676;">Microsof...</div>
<div class="t " style="left:679.25px;top:557.10px;letter-spacing:-0.07px;color:#136676;">Shell Lig...</div>
<div class="t " style="left:716.25px;top:557.10px;color:#136676;">C:\WIND...</div>
<div class="t " style="left:753.75px;top:557.10px;letter-spacing:-0.13px;color:#136676;">SHLWAPI</div>
<div class="t " style="left:4.00px;top:567.94px;letter-spacing:-0.08px;color:#136676;">COMCTL32.dll</div>
<div class="t " style="left:484.50px;top:567.94px;letter-spacing:-0.20px;color:#136676;">1E59...</div>
<div class="t r" style="left:324.52px;top:567.94px;width:200px;color:#136676;">49</div>
<div class="t r" style="left:361.48px;top:567.94px;width:200px;letter-spacing:-0.02px;color:#136676;">2,696,688</div>
<div class="t " style="left:567.00px;top:567.94px;letter-spacing:0.10px;color:#136676;">09-Nov-...</div>
<div class="t c" style="left:520.47px;top:567.94px;width:200px;letter-spacing:-0.05px;color:#136676;">6.10 (Wi...</div>
<div class="t " style="left:642.00px;top:567.94px;letter-spacing:0.08px;color:#136676;">Microsof...</div>
<div class="t " style="left:679.25px;top:567.94px;letter-spacing:-0.12px;color:#136676;">User Exp...</div>
<div class="t " style="left:716.25px;top:567.94px;color:#136676;">C:\WIND...</div>
<div class="t " style="left:753.75px;top:567.94px;letter-spacing:0.14px;color:#136676;">comctl32</div>
<div class="t " style="left:4.00px;top:578.77px;letter-spacing:-0.16px;color:#136676;">VERSION.dll</div>
<div class="t " style="left:484.50px;top:578.77px;letter-spacing:-0.20px;color:#136676;">2E99...</div>
<div class="t r" style="left:324.68px;top:578.77px;width:200px;letter-spacing:0.18px;color:#136676;">114</div>
<div class="t r" style="left:361.49px;top:578.77px;width:200px;color:#136676;">50,976</div>
<div class="t " style="left:567.00px;top:578.77px;letter-spacing:0.07px;color:#136676;">07-May-...</div>
<div class="t c" style="left:520.47px;top:578.77px;width:200px;letter-spacing:-0.07px;color:#136676;">10.0.226...</div>
<div class="t " style="left:642.00px;top:578.77px;letter-spacing:0.08px;color:#136676;">Microsof...</div>
<div class="t " style="left:679.25px;top:578.77px;letter-spacing:-0.04px;color:#136676;">Version C...</div>
<div class="t " style="left:716.25px;top:578.77px;color:#136676;">C:\WIND...</div>
<div class="t " style="left:753.75px;top:578.77px;letter-spacing:0.06px;color:#136676;">version</div>
<div class="a" style="left:789px;top:317.6px;width:10px;height:270px;background:#f7f7f7"></div>
<div class="a" style="left:792px;top:326.5px;width:3.8px;height:9.3px;background:#8a8a8a;border-radius:1px"></div>
<div class="a" style="left:0;top:588.5px;width:800px;height:11.5px;background:#ffffff"></div>
<div class="a" style="left:0;top:589px;width:800px;height:0.7px;background:#d8dede"></div>
<div class="t " style="left:6.25px;top:591.57px;">Set priority class.</div>
<div class="a" style="left:371px;top:590px;width:0.6px;height:10px;background:#e4e4e4"></div>
<div class="t " style="left:381.00px;top:591.57px;letter-spacing:0.10px;">1217 Modules</div>
<svg class="a" style="left:742.5px;top:592.8px" width="4" height="5.5" viewBox="0 0 4 5.5"><rect x="0" y="0" width="4" height="5.5" fill="#8a8a8a"/><path d="M0 1.4H4M0 2.8H4M0 4.2H4" stroke="#d8d8d8" stroke-width="0.4"/></svg>
<div class="t " style="left:752.25px;top:591.57px;letter-spacing:-0.20px;">CPU 1.6 %</div>
<div class="a" style="left:0;top:0;width:1px;height:600px;background:#8e8e96"></div>
<div class="a" style="left:799px;top:13px;width:1px;height:587px;background:#6a6a6a"></div>
<div class="a" style="left:59.5px;top:83.3px;width:88px;height:143.6px;background:#ffffff;border:0.8px solid #c8c8c8"></div>
<div class="a" style="left:60.6px;top:111.3px;width:84.7px;height:12.5px;background:#aed0f0"></div>
<div class="a" style="left:77.5px;top:126.50px;width:69px;height:0.8px;background:#d8d8d8"></div>
<div class="a" style="left:77.5px;top:145.10px;width:69px;height:0.8px;background:#d8d8d8"></div>
<div class="a" style="left:77.5px;top:191.30px;width:69px;height:0.8px;background:#d8d8d8"></div>
<div class="a" style="left:77.5px;top:209.40px;width:69px;height:0.8px;background:#d8d8d8"></div>
<div class="t " style="left:77.80px;top:85.87px;letter-spacing:-0.12px;color:#2e2e2e;">Close Process...</div>
<div class="t " style="left:77.80px;top:99.37px;letter-spacing:-0.11px;color:#2e2e2e;">Kill Process...</div>
<div class="t " style="left:77.80px;top:112.97px;letter-spacing:0.03px;color:#2e2e2e;">Set Priority</div>
<div class="t " style="left:77.80px;top:131.97px;letter-spacing:0.04px;color:#2e2e2e;">Export</div>
<div class="t " style="left:77.80px;top:150.47px;letter-spacing:0.04px;color:#2e2e2e;">Environment...</div>
<div class="t " style="left:77.80px;top:163.57px;letter-spacing:-0.07px;color:#2e2e2e;">Error Codes...</div>
<div class="t " style="left:77.80px;top:176.97px;color:#2e2e2e;">Search Modules...</div>
<div class="t " style="left:77.80px;top:195.77px;color:#2e2e2e;">Properties...</div>
<div class="t " style="left:77.80px;top:214.47px;letter-spacing:-0.07px;color:#2e2e2e;">Refresh</div>
<svg class="a" style="left:140.5px;top:115.5px" width="3" height="4" viewBox="0 0 3 4"><path d="M0 0L3 2L0 4Z" fill="#fafcff"/></svg>
<svg class="a" style="left:0;top:0" width="160" height="230" viewBox="0 0 160 230">
<svg x="61.3" y="85" width="12" height="12" viewBox="0 0 12 12" overflow="visible"><circle cx="6" cy="6" r="5.5" fill="#fcfcfc" stroke="#bdbdbd" stroke-width="0.8"/><path d="M3.3 3.3L8.7 8.7M8.7 3.3L3.3 8.7" stroke="#d4d4d4" stroke-width="1.1"/></svg>
<svg x="61" y="98.2" width="13" height="12" viewBox="0 0 13 12" overflow="visible"><path d="M1.5 1.3L11.5 10.7M11.5 1.3L1.5 10.7" stroke="#6a6a6a" stroke-width="1.4" stroke-linecap="round"/>
<circle cx="1.6" cy="1.6" r="1" fill="#777"/><circle cx="11.4" cy="1.6" r="1" fill="#777"/><circle cx="1.6" cy="10.4" r="1" fill="#777"/><circle cx="11.4" cy="10.4" r="1" fill="#777"/>
<path d="M3.4 5.4Q3.4 2.6 6.5 2.6Q9.6 2.6 9.6 5.4Q9.6 7 8.6 7.8V10.2H4.4V7.8Q3.4 7 3.4 5.4Z" fill="#ececec" stroke="#3a3a3a" stroke-width="0.8"/>
<ellipse cx="5.3" cy="6.3" rx="1" ry="0.9" fill="#222"/><ellipse cx="7.7" cy="6.3" rx="1" ry="0.9" fill="#222"/><path d="M4.6 8.4H8.4V10H4.6Z" fill="#444"/></svg>
<svg x="62" y="113.2" width="11" height="10" viewBox="0 0 12 11" overflow="visible"><path d="M0.3 0.8L4 9.8" stroke="#444" stroke-width="0.5"/><path d="M0.6 1.2L5.2 3.5L3.8 6.5L1.6 3.8Z" fill="#23309a"/><path d="M4.6 2.6L7.8 1.2L11.6 3.4L9.2 5.6L7 4.2L5.2 3.5Z" fill="#3346b0"/></svg>
<svg x="62" y="130.5" width="12" height="12" viewBox="0 0 12 12" overflow="visible"><path d="M2 2.6H8.2L10.6 5V11.6H2Z" fill="#fafaf8" stroke="#c6c6c6" stroke-width="0.6"/><path d="M1.9 0.2H5V3.2H7.2L3.45 7.3L-0.3 3.2H1.9Z" fill="#2ca52c"/></svg>
<svg x="61.7" y="151" width="12" height="9" viewBox="0 0 12 9" overflow="visible"><path d="M0.1 2.4Q3 2.2 5.7 3.4Q7.5 1 9.4 0.1Q11.2 1.5 11.8 4.3Q11 6 9.7 7L5.7 7.3Q3.5 8.6 2 8.6Q0.5 6 0.1 2.4Z" fill="#8aa62e"/><path d="M5.7 3.4L5.7 7.3" stroke="#7a9424" stroke-width="0.4"/></svg>
<svg x="61.8" y="163.8" width="11.8" height="10.8" viewBox="0 0 12 11" overflow="visible"><path d="M6 0.4L11.6 10.5H0.4Z" fill="#f2c624" stroke="#b8902a" stroke-width="0.7" stroke-linejoin="round"/><path d="M5.4 3.6H6.6L6.4 7.6H5.6Z" fill="#3a2a10"/><rect x="5.4" y="8.2" width="1.2" height="1.1" fill="#3a2a10"/></svg>
<svg x="62.2" y="176.5" width="11" height="11" viewBox="0 0 11 11" overflow="visible"><circle cx="6.8" cy="4.2" r="3.5" fill="#fdfdfd" stroke="#8e8e8e" stroke-width="0.7"/><path d="M4.4 6.8L0.8 10.4" stroke="#7a7a7a" stroke-width="1.2" stroke-linecap="round"/></svg>
<svg x="61.6" y="195.8" width="11.6" height="11.6" viewBox="0 0 12 12" overflow="visible"><circle cx="6" cy="6" r="5.3" fill="#2a46a8"/><circle cx="6" cy="6" r="4.3" fill="#1f3c98"/><path d="M6 4.4V9.4" stroke="#dfe8ff" stroke-width="0.75"/><circle cx="6" cy="3" r="0.5" fill="#dfe8ff"/></svg>
<svg x="63.2" y="214.6" width="8" height="10.6" viewBox="0 0 9 12" overflow="visible"><path d="M1.2 5.2Q1.6 2.2 5.4 2.3" stroke="#5cc45c" stroke-width="1.8" fill="none"/><path d="M4.6 0.1L8.4 2.4L4.6 4.6Z" fill="#48b048"/><path d="M7.8 6.8Q7.4 9.8 3.6 9.7" stroke="#5cc45c" stroke-width="1.8" fill="none"/><path d="M4.4 11.9L0.6 9.6L4.4 7.4Z" fill="#48b048"/></svg>
</svg>
<div class="a" style="left:145.6px;top:109.4px;width:73.4px;height:83.6px;background:#ffffff;border:0.8px solid #c8c8c8"></div>
<div class="a" style="left:147.2px;top:151.8px;width:12.8px;height:12.4px;background:#b6d6f2"></div>
<div class="t " style="left:163.60px;top:113.37px;letter-spacing:-0.05px;color:#2e2e2e;">Real Time</div>
<div class="t " style="left:163.60px;top:126.57px;letter-spacing:0.23px;color:#2e2e2e;">High</div>
<div class="t " style="left:163.60px;top:139.87px;letter-spacing:0.13px;color:#2e2e2e;">Above normal</div>
<div class="t " style="left:163.60px;top:153.37px;letter-spacing:0.19px;color:#2e2e2e;">Normal</div>
<div class="t " style="left:163.60px;top:166.77px;letter-spacing:0.10px;color:#2e2e2e;">Below normal</div>
<div class="t " style="left:163.60px;top:180.17px;letter-spacing:0.12px;color:#2e2e2e;">Idle</div>
</div></body></html>
